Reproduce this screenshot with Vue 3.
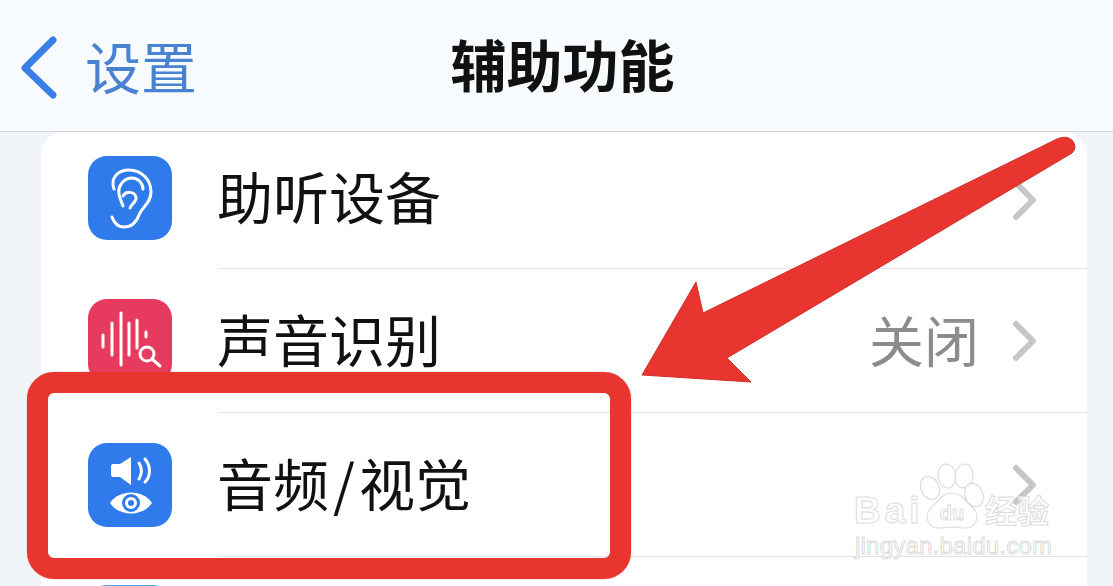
<template>
  <div class="page">
    <header class="nav">
      <div class="back">
        <svg class="back-arrow" width="40" height="64" viewBox="0 0 40 64">
          <path d="M34 5 L6 33 L34 60" />
        </svg>
        <span>设置</span>
      </div>
      <h1>辅助功能</h1>
    </header>

    <main class="card">
      <div class="row first">
        <div class="icon blue">
          <svg width="84" height="84" viewBox="0 0 84 84" class="glyph">
            <path d="M26 33 C22 22 30 14 41 14 C54 14 63 24 63 36 C63 47 54 51 51 59 C48 67 43 71 36 71 C30 71 26 67 24 61" />
            <path d="M35 50 C32 42 29 36 32 30 C35 24 40 22 44 22 C50 22 55 27 55 33" />
            <path d="M35 40 C38 35 46 35 48 41 C49 46 43 48 42 52" />
          </svg>
        </div>
        <div class="row-body">
          <span class="label">助听设备</span>
          <svg class="chev" width="26" height="42" viewBox="0 0 26 42"><path d="M5 4 L22 21 L5 38" /></svg>
        </div>
      </div>

      <div class="row">
        <div class="icon red">
          <svg width="84" height="84" viewBox="0 0 84 84" class="glyph">
            <path d="M15 36V48M24 24V56M33 14V66M41 24V56M49 21V49M58 33V38" />
            <circle cx="59" cy="55" r="7" />
            <path d="M64 60 L72 67" />
          </svg>
        </div>
        <div class="row-body">
          <span class="label">声音识别</span>
          <span class="value">关闭</span>
          <svg class="chev" width="26" height="42" viewBox="0 0 26 42"><path d="M5 4 L22 21 L5 38" /></svg>
        </div>
      </div>

      <div class="row">
        <div class="icon blue">
          <svg width="84" height="84" viewBox="0 0 84 84" class="glyph">
            <path class="solid" d="M25 21 H32 L43 14 V42 L32 34 H25 Q23 34 23 32 V23 Q23 21 25 21 Z" />
            <path d="M51 20 C54 25 54 31 51 36" />
            <path d="M57 16 C63 23 63 33 57 39" />
            <path class="solid" d="M22 60 C31 46 55 46 64 60 C55 74 31 74 22 60 Z" />
            <circle class="iris" cx="43" cy="60" r="9" />
            <circle class="solid" cx="43" cy="60" r="6" />
            <circle class="iris" cx="43" cy="60" r="3" />
          </svg>
        </div>
        <div class="row-body">
          <span class="label">音频<span class="slash">/</span>视觉</span>
          <svg class="chev" width="26" height="42" viewBox="0 0 26 42"><path d="M5 4 L22 21 L5 38" /></svg>
        </div>
      </div>

      <div class="row">
        <div class="icon sky"></div>
        <div class="row-body"></div>
      </div>
    </main>

    <!-- annotation drawn on top of the screenshot -->
    <div class="red-box"></div>
    <svg class="arrow" width="1113" height="586" viewBox="0 0 1113 586">
      <path d="M642 375 L696 282 L703 313 L1057 139 Q1066 135 1072 140 Q1078 147 1072 153 L727 358 L751 382 Z" />
    </svg>

    <svg class="watermark" width="210" height="110" viewBox="0 0 210 110">
      <g class="paw">
        <ellipse cx="77" cy="21" rx="9" ry="12" transform="rotate(-25 77 21)" />
        <ellipse cx="94" cy="9" rx="9" ry="12" transform="rotate(-8 94 9)" />
        <ellipse cx="111" cy="9" rx="9" ry="12" transform="rotate(8 111 9)" />
        <ellipse cx="121" cy="28" rx="9" ry="12" transform="rotate(-20 121 28)" />
        <path d="M99 26 C109 26 112 34 118 39 C128 47 125 62 110 61 C103 60 95 60 88 61 C73 62 70 47 80 39 C86 34 89 26 99 26 Z" />
      </g>
      <text x="1" y="56" class="wm-big">Bai</text>
      <text x="99" y="53" text-anchor="middle" class="wm-du">du</text>
      <text x="132" y="56" class="wm-cn">经验</text>
      <text x="2" y="87" textLength="197" class="wm-url">jingyan.baidu.com</text>
    </svg>
  </div>
</template>

<script setup>
</script>

<style>
html,
body {
  background: #f1f4f8;
}
</style>

<style scoped>
.page {
  position: relative;
  width: 1113px;
  height: 586px;
  overflow: hidden;
  background: #f1f4f8;
  font-family: "Noto Sans CJK SC", "Liberation Sans", sans-serif;
  color: #111;
}

.nav {
  height: 132px;
  box-sizing: border-box;
  padding-left: 12px;
  border-bottom: 1px solid #cfd2d6;
  background: #f8fbfd;
  display: flex;
  align-items: center;
  justify-content: center;
  position: relative;
}

.nav h1 {
  margin: 0 0 5px;
  font-size: 56px;
  font-weight: 700;
  line-height: 1;
}

.back {
  position: absolute;
  left: 19px;
  top: 30px;
  display: flex;
  align-items: center;
  gap: 26px;
  color: #4a82d2;
  font-size: 56px;
  line-height: 64px;
}

.back-arrow {
  margin-top: 5px;
}

.back-arrow path {
  fill: none;
  stroke: #3a7fe8;
  stroke-width: 7;
  stroke-linecap: round;
  stroke-linejoin: round;
}

.card {
  margin: 0 26px 0 41px;
  background: #fff;
  border-radius: 22px 22px 0 0;
  overflow: hidden;
}

.row {
  height: 144px;
  display: flex;
  align-items: center;
  padding-left: 47px;
}

.row.first {
  height: 137px;
}

.row.first .icon {
  margin-bottom: 6px;
}

.row.first .label {
  margin-bottom: 10px;
}

.icon {
  width: 84px;
  height: 84px;
  flex: none;
  border-radius: 19px;
}

.icon.blue {
  background: #2f7bec;
}

.icon.red {
  background: #e63b5e;
}

.icon.sky {
  background: #4ea3f0;
  align-self: flex-start;
  margin-top: 28px;
}

.glyph {
  display: block;
}

.glyph path,
.glyph circle {
  fill: none;
  stroke: #fff;
  stroke-width: 3;
  stroke-linecap: round;
}

.glyph .solid {
  fill: #fff;
  stroke: none;
}

.glyph .iris {
  fill: #2f7bec;
  stroke: none;
}

.row-body {
  flex: 1;
  align-self: stretch;
  margin-left: 46px;
  padding-right: 50px;
  border-bottom: 1px solid #e2e3e6;
  display: flex;
  align-items: center;
}

.label {
  flex: 1;
  font-size: 56px;
  line-height: 1;
  color: #111;
  margin: 0 0 5px -1px;
}

.slash {
  margin: 0 4px;
}

.value {
  font-size: 55px;
  line-height: 1;
  color: #8c8c90;
  margin: 0 32px 5px 0;
}

.chev {
  flex: none;
}

.chev path {
  fill: none;
  stroke: #c6c6c9;
  stroke-width: 6;
  stroke-linecap: round;
  stroke-linejoin: round;
}

.red-box {
  position: absolute;
  left: 27px;
  top: 372px;
  width: 604px;
  height: 207px;
  box-sizing: border-box;
  border: 21px solid #e8352f;
  border-radius: 27px;
  box-shadow: 0 0 1px #a8322c;
}

.arrow {
  position: absolute;
  left: 0;
  top: 0;
}

.arrow path {
  fill: #e8352f;
  stroke: #cf2f2a;
  stroke-width: 1;
}

.watermark {
  position: absolute;
  left: 853px;
  top: 467px;
  overflow: visible;
}

.watermark text {
  font-family: "Liberation Sans", sans-serif;
  fill: rgba(255, 255, 255, 0.8);
  stroke: #dcdcde;
  stroke-width: 1;
}

.paw ellipse,
.paw path {
  fill: rgba(255, 255, 255, 0.8);
  stroke: #dcdcde;
  stroke-width: 1.2;
}

.wm-big {
  font-size: 37px;
  font-weight: 700;
  letter-spacing: 4px;
}

.wm-du {
  font-size: 20px;
  font-weight: 700;
}

.watermark .wm-cn {
  font-family: "Noto Sans CJK SC", sans-serif;
  font-size: 32px;
  font-weight: 700;
}

.wm-url {
  font-size: 24px;
}
</style>
